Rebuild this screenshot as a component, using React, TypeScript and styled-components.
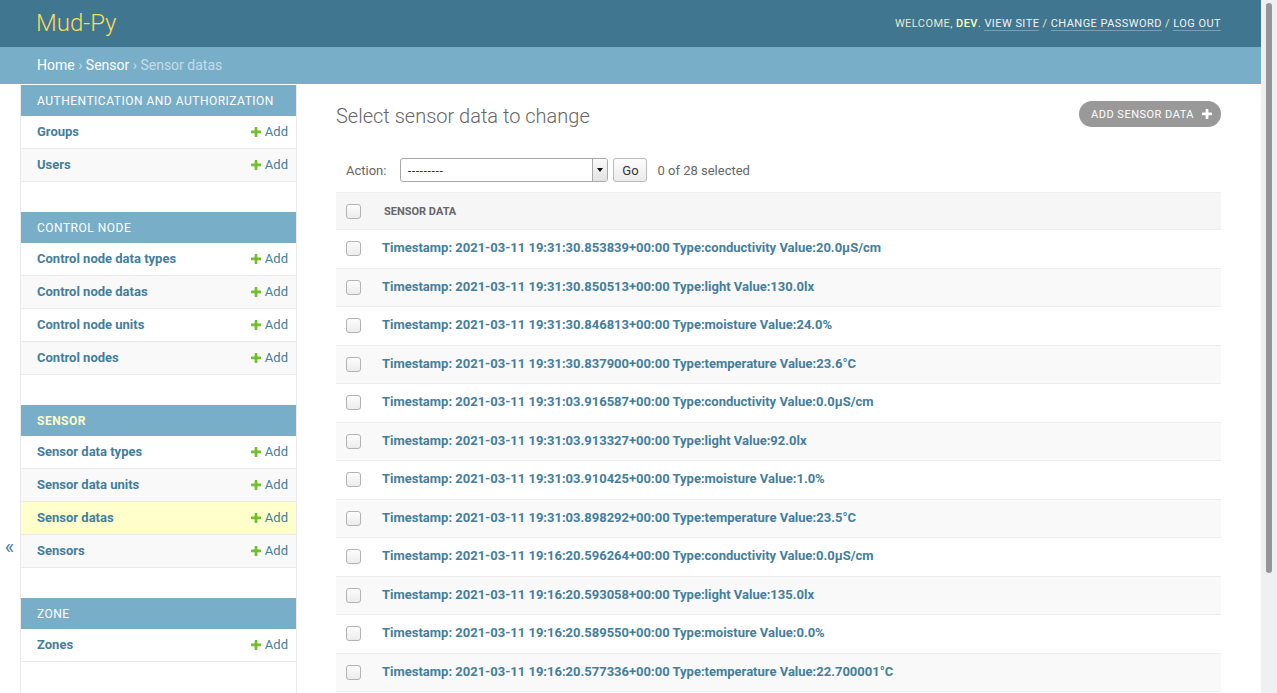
import React from "react";
import styled, { createGlobalStyle } from "styled-components";

const GlobalStyle = createGlobalStyle`
  html, body { margin: 0; padding: 0; }
  body {
    font-family: Roboto, "Liberation Sans", Arial, sans-serif;
    font-size: 14px;
    color: #333;
    background: #fff;
  }
  #root { padding-right: 16px; }
`;

const ScrollTrack = styled.div`
  position: fixed;
  top: 0;
  right: 0;
  width: 16px;
  height: 100vh;
  box-sizing: border-box;
  padding: 3px 5px 0 5px;
  background: #eff0f2;
  z-index: 50;
`;

const ScrollThumb = styled.div`
  height: 570px;
  border-radius: 3px;
  background: #959595;
`;

const Header = styled.header`
  display: flex;
  justify-content: space-between;
  align-items: center;
  height: 47px;
  box-sizing: border-box;
  padding: 0 40px 0 36px;
  background: #417690;
  color: #ffc;
`;

const Branding = styled.h1`
  margin: 0;
  font-size: 24px;
  font-weight: 300;
  line-height: 27px;
  color: #f5dd5d;
`;

const UserTools = styled.div`
  font-size: 11px;
  letter-spacing: 0.45px;
  text-transform: uppercase;
  line-height: 14px;
  color: #e3ead2;
`;

const UserName = styled.strong`
  font-weight: 500;
  color: #ffc;
`;

const ToolLink = styled.a`
  color: #f0f4f6;
  text-decoration: none;
  border-bottom: 1px solid rgba(255, 255, 255, 0.3);
`;

const Breadcrumbs = styled.nav`
  background: #79aec8;
  padding: 10px 37px;
  font-size: 14px;
  line-height: 17px;
  color: #c4dce8;
`;

const Crumb = styled.a`
  color: #fff;
  text-decoration: none;
`;

const Main = styled.div`
  display: flex;
`;

const Toggle = styled.button`
  flex: 0 0 21px;
  width: 21px;
  box-sizing: border-box;
  border: 0;
  border-right: 1px solid #eaeaea;
  background: #fff;
  color: #447e9b;
  font-family: inherit;
  font-size: 20px;
  line-height: 23px;
  padding: 452px 1px 0 0;
  display: flex;
  justify-content: center;
  align-items: flex-start;
`;

const Sidebar = styled.nav`
  flex: 0 0 275px;
  border-top: 1px solid transparent;
  border-right: 1px solid #eaeaea;
  background: #fff;
`;

const Module = styled.section`
  margin-bottom: 30px;
`;

const Caption = styled.div<{ $current?: boolean }>`
  height: 31px;
  box-sizing: border-box;
  display: flex;
  align-items: center;
  padding: 0 16px;
  background: #79aec8;
  color: ${(p) => (p.$current ? "#ffc" : "#fff")};
  font-weight: ${(p) => (p.$current ? 700 : 400)};
  font-size: 12px;
  letter-spacing: 0.5px;
  text-transform: uppercase;
`;

const ModelRow = styled.div<{ $alt?: boolean; $current?: boolean }>`
  display: flex;
  justify-content: space-between;
  align-items: center;
  height: 33px;
  box-sizing: border-box;
  padding: 0 8px 0 16px;
  border-bottom: 1px solid #eaeaea;
  background: ${(p) => (p.$current ? "#ffc" : p.$alt ? "#f9f9f9" : "#fff")};
  font-size: 13px;
  line-height: 16px;
`;

const ModelLink = styled.a`
  color: #447e9b;
  font-weight: 700;
  text-decoration: none;
`;

const AddLink = styled.a`
  display: inline-flex;
  align-items: center;
  gap: 4px;
  color: #447e9b;
  text-decoration: none;
`;

const Content = styled.div`
  flex: 1;
  min-width: 0;
  padding: 20px 40px 20px 39px;
`;

const TitleRow = styled.div`
  display: flex;
  justify-content: space-between;
  align-items: flex-start;
  margin-bottom: 20px;
`;

const Title = styled.h1`
  margin: 0;
  font-size: 20px;
  font-weight: 300;
  line-height: 24px;
  color: #666;
`;

const AddButton = styled.a`
  display: flex;
  align-items: center;
  gap: 8px;
  height: 26px;
  box-sizing: border-box;
  margin-top: -3px;
  padding: 0 9px 0 12px;
  border-radius: 15px;
  background: #999;
  color: #fff;
  font-size: 11px;
  letter-spacing: 0.5px;
  text-transform: uppercase;
  text-decoration: none;
`;

const Actions = styled.div`
  display: flex;
  align-items: center;
  height: 44px;
  box-sizing: border-box;
  padding: 0 10px;
  font-size: 13px;
  color: #666;
`;

const ActionLabel = styled.label`
  margin-right: 14px;
`;

const Select = styled.div`
  display: flex;
  align-items: center;
  width: 208px;
  height: 24px;
  box-sizing: border-box;
  border: 1px solid #a9a9a9;
  border-radius: 3px;
  background: #fff;
  color: #222;
  font-family: "DejaVu Sans", sans-serif;
  font-size: 11px;
`;

const SelectValue = styled.span`
  flex: 1;
  padding-left: 6px;
`;

const SelectArrow = styled.span`
  display: flex;
  align-items: center;
  justify-content: center;
  width: 14px;
  height: 100%;
  border-left: 1px solid #a9a9a9;
  background: linear-gradient(#fafafa, #e2e2e2);
  border-radius: 0 2px 2px 0;
  &::after {
    content: "";
    border-left: 3px solid transparent;
    border-right: 3px solid transparent;
    border-top: 4px solid #111;
  }
`;

const GoButton = styled.button`
  margin-left: 5px;
  width: 34px;
  height: 24px;
  border: 1px solid #bbb;
  border-radius: 3px;
  background: linear-gradient(#fdfdfd, #ebebeb);
  font-family: inherit;
  font-size: 13px;
  color: #333;
  padding: 0;
`;

const Counter = styled.span`
  margin-left: 10px;
`;

const Table = styled.table`
  width: 100%;
  border-collapse: collapse;
`;

const HeadRow = styled.tr`
  background: #f6f6f6;
  border-top: 1px solid #eee;
  border-bottom: 1px solid #eee;
  height: 37px;
`;

const CheckCell = styled.td`
  width: 38px;
  box-sizing: border-box;
  padding: 0 0 0 10px;
  vertical-align: middle;
`;

const HeadText = styled.th`
  text-align: left;
  padding: 0 10px;
  font-size: 11px;
  font-weight: 700;
  color: #666;
  text-transform: uppercase;
`;

const Row = styled.tr<{ $alt?: boolean }>`
  height: 38.5px;
  background: ${(p) => (p.$alt ? "#f9f9f9" : "#fff")};
  border-bottom: 1px solid #eee;
`;

const Cell = styled.td`
  padding: 0 8px 1px;
  font-size: 13px;
  line-height: 16px;
`;

const RowLink = styled.a`
  color: #447e9b;
  font-weight: 700;
  text-decoration: none;
`;

const Checkbox = styled.input`
  appearance: none;
  display: block;
  margin: 0;
  width: 15px;
  height: 15px;
  border: 1px solid #b3b3b3;
  border-radius: 3px;
  background: linear-gradient(#fcfcfc, #ececec);
`;

const Paginator = styled.p`
  margin: 0;
  padding: 14px 0 10px;
  line-height: 22px;
  font-size: 13px;
  color: #666;
  border-bottom: 1px solid #eee;
`;

const PlusIcon = ({ color, size = 10 }: { color: string; size?: number }) => (
  <svg width={size} height={size} viewBox="192 192 1408 1408" aria-hidden="true">
    <path
      fill={color}
      d="M1600 796v192q0 40-28 68t-68 28h-416v416q0 40-28 68t-68 28h-192q-40 0-68-28t-28-68v-416h-416q-40 0-68-28t-28-68v-192q0-40 28-68t68-28h416v-416q0-40 28-68t68-28h192q40 0 68 28t28 68v416h416q40 0 68 28t28 68z"
    />
  </svg>
);

type Section = { name: string; current?: boolean; models: string[] };

const sections: Section[] = [
  { name: "Authentication and Authorization", models: ["Groups", "Users"] },
  {
    name: "Control node",
    models: ["Control node data types", "Control node datas", "Control node units", "Control nodes"],
  },
  {
    name: "Sensor",
    current: true,
    models: ["Sensor data types", "Sensor data units", "Sensor datas", "Sensors"],
  },
  { name: "Zone", models: ["Zones"] },
];

const rows = [
  "Timestamp: 2021-03-11 19:31:30.853839+00:00 Type:conductivity Value:20.0μS/cm",
  "Timestamp: 2021-03-11 19:31:30.850513+00:00 Type:light Value:130.0lx",
  "Timestamp: 2021-03-11 19:31:30.846813+00:00 Type:moisture Value:24.0%",
  "Timestamp: 2021-03-11 19:31:30.837900+00:00 Type:temperature Value:23.6°C",
  "Timestamp: 2021-03-11 19:31:03.916587+00:00 Type:conductivity Value:0.0μS/cm",
  "Timestamp: 2021-03-11 19:31:03.913327+00:00 Type:light Value:92.0lx",
  "Timestamp: 2021-03-11 19:31:03.910425+00:00 Type:moisture Value:1.0%",
  "Timestamp: 2021-03-11 19:31:03.898292+00:00 Type:temperature Value:23.5°C",
  "Timestamp: 2021-03-11 19:16:20.596264+00:00 Type:conductivity Value:0.0μS/cm",
  "Timestamp: 2021-03-11 19:16:20.593058+00:00 Type:light Value:135.0lx",
  "Timestamp: 2021-03-11 19:16:20.589550+00:00 Type:moisture Value:0.0%",
  "Timestamp: 2021-03-11 19:16:20.577336+00:00 Type:temperature Value:22.700001°C",
];

export default function App() {
  return (
    <>
      <GlobalStyle />
      <ScrollTrack>
        <ScrollThumb />
      </ScrollTrack>
      <Header>
        <Branding>Mud-Py</Branding>
        <UserTools>
          Welcome, <UserName>dev</UserName>. <ToolLink href="#">View site</ToolLink> /{" "}
          <ToolLink href="#">Change password</ToolLink> / <ToolLink href="#">Log out</ToolLink>
        </UserTools>
      </Header>
      <Breadcrumbs>
        <Crumb href="#">Home</Crumb> › <Crumb href="#">Sensor</Crumb> › Sensor datas
      </Breadcrumbs>
      <Main>
        <Toggle aria-label="Toggle navigation">«</Toggle>
        <Sidebar>
          {sections.map((s) => (
            <Module key={s.name}>
              <Caption $current={s.current}>{s.name}</Caption>
              {s.models.map((m, i) => (
                <ModelRow key={m} $alt={i % 2 === 1} $current={m === "Sensor datas"}>
                  <ModelLink href="#">{m}</ModelLink>
                  <AddLink href="#">
                    <PlusIcon color="#70bf2b" />
                    Add
                  </AddLink>
                </ModelRow>
              ))}
            </Module>
          ))}
        </Sidebar>
        <Content>
          <TitleRow>
            <Title>Select sensor data to change</Title>
            <AddButton href="#">
              Add sensor data
              <PlusIcon color="#fff" />
            </AddButton>
          </TitleRow>
          <Actions>
            <ActionLabel>Action:</ActionLabel>
            <Select>
              <SelectValue>---------</SelectValue>
              <SelectArrow />
            </Select>
            <GoButton>Go</GoButton>
            <Counter>0 of 28 selected</Counter>
          </Actions>
          <Table>
            <thead>
              <HeadRow>
                <CheckCell as="th">
                  <Checkbox type="checkbox" />
                </CheckCell>
                <HeadText>Sensor data</HeadText>
              </HeadRow>
            </thead>
            <tbody>
              {rows.map((r, i) => (
                <Row key={r} $alt={i % 2 === 1}>
                  <CheckCell>
                    <Checkbox type="checkbox" />
                  </CheckCell>
                  <Cell>
                    <RowLink href="#">{r}</RowLink>
                  </Cell>
                </Row>
              ))}
            </tbody>
          </Table>
          <Paginator>28 sensor datas</Paginator>
        </Content>
      </Main>
    </>
  );
}
